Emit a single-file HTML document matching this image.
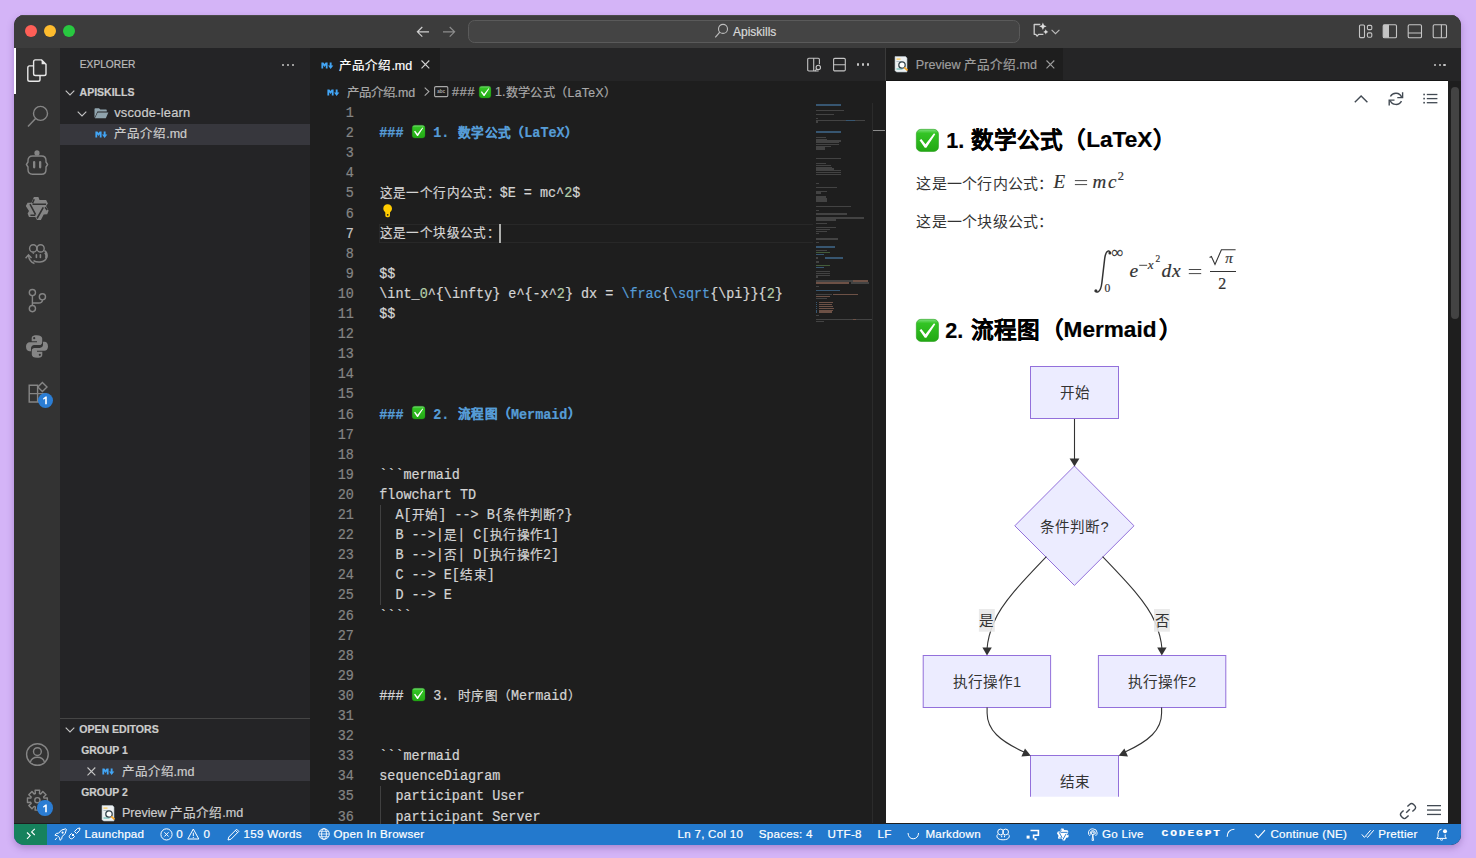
<!DOCTYPE html>
<html lang="zh-CN">
<head>
<meta charset="utf-8">
<style>
*{box-sizing:border-box;margin:0;padding:0}
html,body{width:1476px;height:858px;overflow:hidden}
body{background:#d4b4f7;font-family:"Liberation Sans",sans-serif;position:relative}
#win{position:absolute;left:14px;top:15px;width:1447px;height:830px;border-radius:10px;overflow:hidden;background:#1e1e1e;box-shadow:0 3px 7px rgba(90,50,130,0.35)}
#pg{position:absolute;left:-14px;top:-15px;width:1476px;height:858px}
.a{position:absolute}
.t{position:absolute;white-space:pre;line-height:1;-webkit-text-stroke:0.2px}
.dot{position:absolute;width:12px;height:12px;border-radius:50%;top:24.6px}
svg{position:absolute;overflow:visible}
</style>
</head>
<body>
<div id="win"><div id="pg">
<div class="a" style="left:0px;top:0px;width:1476px;height:48px;background:#3c3c3c;"></div>
<!-- title bar -->

<div class="dot" style="left:24.6px;background:#fe5f57"></div>
<div class="dot" style="left:43.9px;background:#febc2e"></div>
<div class="dot" style="left:62.9px;background:#28c840"></div>

<div class="a" style="left:0;top:15px;width:1476px;height:1px;background:#4a4a4a"></div>
<!-- nav arrows -->
<svg style="left:416px;top:26px" width="14" height="12" viewBox="0 0 14 12"><path d="M13 5.8H1.6M6.3 1L1.4 5.8l4.9 4.9" fill="none" stroke="#cfcfcf" stroke-width="1.2"/></svg>
<svg style="left:441.5px;top:26px" width="14" height="12" viewBox="0 0 14 12"><path d="M1 5.8h11.4M7.7 1l4.9 4.8-4.9 4.9" fill="none" stroke="#8c8c8c" stroke-width="1.2"/></svg>
<!-- command center -->
<div class="a" style="left:468px;top:19.5px;width:552px;height:23px;border:1px solid #5a5a5a;border-radius:6.5px;background:#444444"></div>
<svg style="left:714px;top:23px" width="14" height="16" viewBox="0 0 14 16"><circle cx="9" cy="5.9" r="4.5" fill="none" stroke="#bdbdbd" stroke-width="1.1"/><path d="M5.8 9.2L1.3 14.4" stroke="#bdbdbd" stroke-width="1.2"/></svg>
<div class="t" style="left:733px;top:26px;font-size:12px;color:#d8d8d8">Apiskills</div>
<!-- copilot -->
<svg style="left:1032px;top:22px" width="18" height="18" viewBox="0 0 18 18"><path d="M8.3 2.5H2.2v9.8h1.6l1.3 1.8 1.5-1.8h4.8" fill="none" stroke="#cccccc" stroke-width="1.3" stroke-linejoin="round"/><path d="M10.9 0.6l1.1 2.6 2.6 1.1-2.6 1.1-1.1 2.6-1.1-2.6-2.6-1.1 2.6-1.1z" fill="#dddddd"/><path d="M13.8 7.3l0.8 1.8 1.8 0.8-1.8 0.8-0.8 1.8-0.8-1.8-1.8-0.8 1.8-0.8z" fill="#dddddd"/></svg>
<svg style="left:1051px;top:28.5px" width="9" height="6" viewBox="0 0 9 6"><path d="M0.6 0.8l3.9 3.9 3.9-3.9" fill="none" stroke="#bdbdbd" stroke-width="1.1"/></svg>
<!-- layout icons -->
<svg style="left:1358px;top:24px" width="16" height="15" viewBox="0 0 16 15"><rect x="1.5" y="1" width="5" height="12.6" rx="1" fill="none" stroke="#c5c5c5" stroke-width="1.1"/><rect x="9.4" y="1.4" width="4.4" height="4.2" rx="1.2" fill="none" stroke="#c5c5c5" stroke-width="1.1"/><rect x="9.4" y="8.9" width="4.4" height="4.3" rx="1.2" fill="none" stroke="#c5c5c5" stroke-width="1.1"/></svg>
<svg style="left:1382px;top:24px" width="16" height="15" viewBox="0 0 16 15"><rect x="1.2" y="0.8" width="13.3" height="12.9" rx="1.3" fill="none" stroke="#c5c5c5" stroke-width="1.1"/><rect x="1.2" y="0.8" width="5.8" height="12.9" fill="#c5c5c5"/></svg>
<svg style="left:1407px;top:24px" width="16" height="15" viewBox="0 0 16 15"><rect x="1.2" y="0.8" width="13.3" height="12.9" rx="1.3" fill="none" stroke="#c5c5c5" stroke-width="1.1"/><path d="M1.2 9h13.3" stroke="#c5c5c5" stroke-width="1.1"/></svg>
<svg style="left:1432px;top:24px" width="16" height="15" viewBox="0 0 16 15"><rect x="1.2" y="0.8" width="13.3" height="12.9" rx="1.3" fill="none" stroke="#c5c5c5" stroke-width="1.1"/><path d="M9.4 0.8v12.9" stroke="#c5c5c5" stroke-width="1.1"/></svg>

<div class="a" style="left:0px;top:48px;width:60px;height:775px;background:#333333;"></div>



<div class="a" style="left:14px;top:48px;width:2px;height:45.5px;background:#ffffff"></div>
<!-- explorer -->
<svg style="left:26px;top:58px" width="22" height="26" viewBox="0 0 22 26"><path d="M9.4 1.9H15.6L20 6.3V15.7Q20 17.5 18.2 17.5H9.4Q7.6 17.5 7.6 15.7V3.7Q7.6 1.9 9.4 1.9Z" fill="none" stroke="#e8e8e8" stroke-width="1.4"/><path d="M15.6 1.9V6.3H20Z" fill="#e8e8e8"/><path d="M7.6 7.9H3.6Q1.8 7.9 1.8 9.7V21.5Q1.8 23.3 3.6 23.3H12.2Q14 23.3 14 21.5V17.5" fill="none" stroke="#e8e8e8" stroke-width="1.4"/></svg>
<!-- search -->
<svg style="left:26px;top:104px" width="24" height="26" viewBox="0 0 24 26"><circle cx="14.5" cy="9.4" r="7" fill="none" stroke="#858585" stroke-width="1.4"/><path d="M9.6 14.6L2 22.6" stroke="#858585" stroke-width="1.5"/></svg>
<!-- robot -->
<svg style="left:25px;top:149px" width="26" height="28" viewBox="0 0 26 28"><circle cx="12" cy="3.9" r="2.6" fill="#858585"/><path d="M7.5 7H16.5Q21 7 21 11.5V13L22.6 15.5L21 18V20.5Q21 25.3 16.5 25.3H7.5Q3 25.3 3 20.5V18L1.4 15.5L3 13V11.5Q3 7 7.5 7Z" fill="none" stroke="#858585" stroke-width="1.4" stroke-linejoin="round"/><rect x="8" y="12" width="2.3" height="7.4" rx="1.1" fill="#858585"/><rect x="14" y="12" width="2.3" height="7.4" rx="1.1" fill="#858585"/></svg>
<!-- star/qoder -->
<svg style="left:22px;top:194px" width="30" height="30" viewBox="0 0 30 30"><path d="M11.9 3H16.4L17.5 5.9L24.1 6.1L25.9 9.4L24.1 11.9L26.6 16.8L25.2 20.3L21.7 20.6L18.9 25.9H15L13.3 23.1H7L5.6 19.6L7 17.1L3.8 11.9L5.6 8.7H9.4Z" fill="#858585"/><path d="M10.5 10.3H24.1M8 10.1L13.6 20.6M21.3 13.3L15 24.5M12.2 5.2L10.5 9.1M8.4 21.3H13.3M23.1 13.3L25.2 16.1" stroke="#333333" stroke-width="1.6" fill="none"/></svg>
<!-- copilot face -->
<svg style="left:24px;top:242px" width="26" height="24" viewBox="0 0 26 24"><circle cx="9.2" cy="6.4" r="3.6" fill="none" stroke="#858585" stroke-width="1.4"/><circle cx="16.6" cy="6.4" r="3.6" fill="none" stroke="#858585" stroke-width="1.4"/><path d="M8.5 10.5Q9 11 10 11.5" stroke="#858585" stroke-width="1.2"/><path d="M20.3 8.6Q23.5 10 23 14.5Q22 19.5 16 20Q12 20.3 9.5 18.6" fill="none" stroke="#858585" stroke-width="1.4"/><path d="M21 10.5Q23 12.5 22 16" stroke="#858585" stroke-width="2.2" fill="none"/><rect x="11.6" y="12" width="1.6" height="4.2" rx=".8" fill="#858585"/><rect x="15.6" y="12" width="1.6" height="4.2" rx=".8" fill="#858585"/><path d="M4.5 13.6Q5.2 19.5 10.5 21.5" fill="none" stroke="#858585" stroke-width="1.4"/><path d="M1.6 16.3L4.5 12.8L7.5 16" fill="none" stroke="#858585" stroke-width="1.4"/></svg>
<!-- git -->
<svg style="left:26px;top:286px" width="24" height="28" viewBox="0 0 24 28"><circle cx="6.4" cy="6.6" r="3.1" fill="none" stroke="#858585" stroke-width="1.4"/><circle cx="6.4" cy="22.6" r="3.1" fill="none" stroke="#858585" stroke-width="1.4"/><circle cx="16.4" cy="10.8" r="3.1" fill="none" stroke="#858585" stroke-width="1.4"/><path d="M6.4 9.7V19.5M16.4 13.9Q16.4 17 12.5 17H6.4" fill="none" stroke="#858585" stroke-width="1.4"/></svg>
<!-- python -->
<svg style="left:25px;top:334px" width="24" height="25" viewBox="0 0 24 25"><path d="M11.6 1.2C7.2 1.2 6.7 3 6.7 4.5V7.2H12V8.2H4.6C2.6 8.2 1 10 1 12.6C1 15.5 2.4 17.2 4.4 17.2H6V14.2C6 12.5 7.5 11.1 9.2 11.1H14.6C16 11.1 17.2 9.9 17.2 8.5V4.5C17.2 2.5 15.4 1.2 11.6 1.2Z" fill="#858585"/><path d="M12.4 23.8C16.8 23.8 17.3 22 17.3 20.5V17.8H12V16.8H19.4C21.4 16.8 23 15 23 12.4C23 9.5 21.6 7.8 19.6 7.8H18V10.8C18 12.5 16.5 13.9 14.8 13.9H9.4C8 13.9 6.8 15.1 6.8 16.5V20.5C6.8 22.5 8.6 23.8 12.4 23.8Z" fill="#858585"/><circle cx="9.2" cy="4.2" r="1.1" fill="#333"/><circle cx="14.8" cy="20.8" r="1.1" fill="#333"/></svg>
<!-- extensions -->
<svg style="left:26px;top:380px" width="26" height="26" viewBox="0 0 26 26"><path d="M3.2 5.2H11.6V22H3.2ZM3.2 13.6H20V22H11.6" fill="none" stroke="#858585" stroke-width="1.4"/><path d="M16.4 2.4L21 7L16.4 11.6L11.8 7Z" fill="none" stroke="#858585" stroke-width="1.4"/></svg>
<div class="a" style="left:37.6px;top:392.8px;width:15px;height:15px;border-radius:50%;background:#2b7dd3"></div>
<svg style="left:42px;top:396px" width="7" height="9" viewBox="0 0 7 9"><path d="M1 2.4L3.6 0.6H4.8V8.2H3.2V2.6L1.6 3.7Z" fill="#fff"/></svg>
<!-- account -->
<svg style="left:25px;top:742px" width="25" height="25" viewBox="0 0 25 25"><circle cx="12.4" cy="12.5" r="10.8" fill="none" stroke="#858585" stroke-width="1.4"/><circle cx="12.4" cy="9.6" r="3.9" fill="none" stroke="#858585" stroke-width="1.4"/><path d="M5.3 20.4Q6.5 15.3 12.4 15.3Q18.3 15.3 19.5 20.4" fill="none" stroke="#858585" stroke-width="1.4"/></svg>
<!-- gear -->
<svg style="left:25px;top:788px" width="25" height="25" viewBox="0 0 25 25"><path d="M10.35 5.51 L10.11 2.26 L14.69 2.26 L14.45 5.51 L15.69 6.02 L17.81 3.55 L21.05 6.79 L18.58 8.91 L19.09 10.15 L22.34 9.91 L22.34 14.49 L19.09 14.25 L18.58 15.49 L21.05 17.61 L17.81 20.85 L15.69 18.38 L14.45 18.89 L14.69 22.14 L10.11 22.14 L10.35 18.89 L9.11 18.38 L6.99 20.85 L3.75 17.61 L6.22 15.49 L5.71 14.25 L2.46 14.49 L2.46 9.91 L5.71 10.15 L6.22 8.91 L3.75 6.79 L6.99 3.55 L9.11 6.02Z" fill="none" stroke="#858585" stroke-width="1.4" stroke-linejoin="round"/><circle cx="12.4" cy="12.2" r="2.6" fill="none" stroke="#858585" stroke-width="1.4"/></svg>
<div class="a" style="left:37.3px;top:800.2px;width:15.4px;height:15.4px;border-radius:50%;background:#2b7dd3"></div>
<svg style="left:41.8px;top:803.6px" width="7" height="9" viewBox="0 0 7 9"><path d="M1 2.4L3.6 0.6H4.8V8.2H3.2V2.6L1.6 3.7Z" fill="#fff"/></svg>

<div class="a" style="left:60px;top:48px;width:250px;height:775px;background:#242426;"></div>
<div class="t" style="left:79.8px;top:59.93px;font-size:10.2px;color:#bbbbbb;font-weight:normal;letter-spacing:0px;font-family:'Liberation Sans',sans-serif;">EXPLORER</div>
<div class="a" style="left:282.0px;top:63.5px;width:2.2px;height:2.2px;border-radius:50%;background:#c5c5c5"></div>
<div class="a" style="left:286.9px;top:63.5px;width:2.2px;height:2.2px;border-radius:50%;background:#c5c5c5"></div>
<div class="a" style="left:291.79999999999995px;top:63.5px;width:2.2px;height:2.2px;border-radius:50%;background:#c5c5c5"></div>
<svg style="left:64.8px;top:89.6px" width="10" height="6" viewBox="0 0 10 6"><path d="M0.7 0.7L5 5L9.3 0.7" fill="none" stroke="#c5c5c5" stroke-width="1.1"/></svg>
<div class="t" style="left:79.6px;top:87.28px;font-size:10.5px;color:#cccccc;font-weight:bold;letter-spacing:0px;font-family:'Liberation Sans',sans-serif;">APISKILLS</div>
<svg style="left:77px;top:110.8px" width="10" height="6" viewBox="0 0 10 6"><path d="M0.7 0.7L5 5L9.3 0.7" fill="none" stroke="#c5c5c5" stroke-width="1.1"/></svg>
<svg style="left:93.5px;top:108px" width="15" height="11" viewBox="0 0 15 11"><path d="M0.5 1.2Q0.5 0.3 1.4 0.3H5L6.3 1.6H12Q12.8 1.6 12.8 2.4V3.6H3.4L0.5 10Z" fill="#90a4ae"/><path d="M3.6 4.4H14.4L11.8 10.2H0.9Z" fill="#90a4ae"/></svg>
<div class="t" style="left:114.2px;top:107.13px;font-size:12.9px;color:#cccccc;font-weight:normal;letter-spacing:0.2px;font-family:'Liberation Sans',sans-serif;">vscode-learn</div>
<div class="a" style="left:60px;top:123.5px;width:250px;height:21px;background:#37373d;"></div>
<svg style="left:94.5px;top:131px" width="13" height="7" viewBox="0 0 13 7"><path d="M0.4 6.6V0.4H2.4L3.5 2.1L4.6 0.4H6.6V6.6H4.8V3.3L3.5 5L2.2 3.3V6.6Z" fill="#42a5f5"/><path d="M8.7 0.4H10.6V3.4H12.3L9.65 6.9L7 3.4H8.7Z" fill="#42a5f5"/></svg>
<div class="t" style="left:114.2px;top:128.28px;font-size:12.5px;color:#cccccc;font-weight:normal;letter-spacing:0px;font-family:'Liberation Sans',sans-serif;">产品介绍.md</div>
<div class="a" style="left:60px;top:718.3px;width:250px;height:1px;background:#454545;"></div>
<svg style="left:64.9px;top:726.6px" width="10" height="6" viewBox="0 0 10 6"><path d="M0.7 0.7L5 5L9.3 0.7" fill="none" stroke="#c5c5c5" stroke-width="1.1"/></svg>
<div class="t" style="left:79.2px;top:724.43px;font-size:10.55px;color:#cccccc;font-weight:bold;letter-spacing:0px;font-family:'Liberation Sans',sans-serif;">OPEN EDITORS</div>
<div class="t" style="left:81.2px;top:745.96px;font-size:10.4px;color:#cccccc;font-weight:bold;letter-spacing:0px;font-family:'Liberation Sans',sans-serif;">GROUP 1</div>
<div class="a" style="left:60px;top:760.2px;width:250px;height:21.1px;background:#37373d;"></div>
<svg style="left:86.5px;top:767px" width="9" height="9" viewBox="0 0 9 9"><path d="M0.5 0.5L8.3 8.3M8.3 0.5L0.5 8.3" stroke="#c5c5c5" stroke-width="1.1"/></svg>
<svg style="left:102px;top:768.2px" width="13" height="7" viewBox="0 0 13 7"><path d="M0.4 6.6V0.4H2.4L3.5 2.1L4.6 0.4H6.6V6.6H4.8V3.3L3.5 5L2.2 3.3V6.6Z" fill="#42a5f5"/><path d="M8.7 0.4H10.6V3.4H12.3L9.65 6.9L7 3.4H8.7Z" fill="#42a5f5"/></svg>
<div class="t" style="left:121.5px;top:765.98px;font-size:12.5px;color:#cccccc;font-weight:normal;letter-spacing:0px;font-family:'Liberation Sans',sans-serif;">产品介绍.md</div>
<div class="t" style="left:81.2px;top:788.06px;font-size:10.4px;color:#cccccc;font-weight:bold;letter-spacing:0px;font-family:'Liberation Sans',sans-serif;">GROUP 2</div>
<svg style="left:100.5px;top:804.8px" width="16" height="17" viewBox="0 0 16 17"><path d="M1 0.5H11.5L13 2V16H2.5L1 14.5Z" fill="#eceff1"/><path d="M1 0.5H11.5L13 2V16H2.5L1 14.5Z" fill="none" stroke="#b0bec5" stroke-width=".6"/><rect x="2.5" y="2.5" width="4" height="1.2" fill="#f9c74f"/><rect x="2.5" y="5" width="6" height="1" fill="#b0bec5"/><rect x="2.5" y="12.5" width="6" height="1" fill="#4db6ac"/><circle cx="8" cy="9" r="3.2" fill="#fff" stroke="#37474f" stroke-width="1.3"/><path d="M10.3 11.3L13.5 14.3" stroke="#f9a825" stroke-width="1.8"/></svg>
<div class="t" style="left:121.9px;top:807.49px;font-size:12.6px;color:#cccccc;font-weight:normal;letter-spacing:0px;font-family:'Liberation Sans',sans-serif;">Preview 产品介绍.md</div>
<div class="a" style="left:310px;top:48px;width:576px;height:775px;background:#1e1e1e;"></div>
<div class="a" style="left:440px;top:48px;width:446px;height:33px;background:#252526;"></div>
<svg style="left:321.2px;top:61.5px" width="13" height="7" viewBox="0 0 13 7"><path d="M0.4 6.6V0.4H2.4L3.5 2.1L4.6 0.4H6.6V6.6H4.8V3.3L3.5 5L2.2 3.3V6.6Z" fill="#42a5f5"/><path d="M8.7 0.4H10.6V3.4H12.3L9.65 6.9L7 3.4H8.7Z" fill="#42a5f5"/></svg>
<div class="t" style="left:339.4px;top:59.67px;font-size:12.5px;color:#ffffff;font-weight:normal;letter-spacing:0px;font-family:'Liberation Sans',sans-serif;">产品介绍.md</div>
<svg style="left:420.8px;top:60.2px" width="9" height="9" viewBox="0 0 9 9"><path d="M0.5 0.5L8.3 8.3M8.3 0.5L0.5 8.3" stroke="#d0d0d0" stroke-width="1.1"/></svg>
<svg style="left:806.5px;top:57.5px" width="16" height="16" viewBox="0 0 16 16"><path d="M11.6 13H1.9Q0.7 13 0.7 11.8V1.5Q0.7 0.3 1.9 0.3H11.2Q12.4 0.3 12.4 1.5V6.2" fill="none" stroke="#c5c5c5" stroke-width="1.1"/><path d="M6.7 0.3V13" stroke="#c5c5c5" stroke-width="1.1"/><circle cx="11.3" cy="9.4" r="2.2" fill="#252526" stroke="#c5c5c5" stroke-width="1.1"/><path d="M9.7 11L7.8 13.2" stroke="#c5c5c5" stroke-width="1.1"/></svg>
<svg style="left:832.7px;top:57.5px" width="13" height="14" viewBox="0 0 13 14"><rect x="0.6" y="0.4" width="11.7" height="12.5" rx="1.2" fill="none" stroke="#c5c5c5" stroke-width="1.1"/><path d="M0.6 6.7H12.3" stroke="#c5c5c5" stroke-width="1.1"/></svg>
<div class="a" style="left:857.3px;top:63.4px;width:2.2px;height:2.2px;border-radius:50%;background:#c5c5c5"></div>
<div class="a" style="left:862.1999999999999px;top:63.4px;width:2.2px;height:2.2px;border-radius:50%;background:#c5c5c5"></div>
<div class="a" style="left:867.0px;top:63.4px;width:2.2px;height:2.2px;border-radius:50%;background:#c5c5c5"></div>
<svg style="left:326.8px;top:89.2px" width="13" height="7" viewBox="0 0 13 7"><path d="M0.4 6.6V0.4H2.4L3.5 2.1L4.6 0.4H6.6V6.6H4.8V3.3L3.5 5L2.2 3.3V6.6Z" fill="#42a5f5"/><path d="M8.7 0.4H10.6V3.4H12.3L9.65 6.9L7 3.4H8.7Z" fill="#42a5f5"/></svg>
<div class="t" style="left:346.6px;top:86.66px;font-size:12.4px;color:#a9a9a9;font-weight:normal;letter-spacing:0px;font-family:'Liberation Sans',sans-serif;">产品介绍.md</div>
<svg style="left:423.5px;top:87px" width="6" height="10" viewBox="0 0 6 10"><path d="M0.7 0.6L4.9 4.6L0.7 8.6" fill="none" stroke="#a9a9a9" stroke-width="1.1"/></svg>
<svg style="left:433.8px;top:85.8px" width="15" height="12" viewBox="0 0 15 12"><rect x="0.6" y="0.6" width="13.2" height="10" rx="1.2" fill="none" stroke="#a9a9a9" stroke-width="1.1"/><text x="7.2" y="7.3" font-size="4.6" font-family="Liberation Sans" font-weight="bold" fill="#a9a9a9" text-anchor="middle">abc</text></svg>
<div class="t" style="left:451.9px;top:86.06px;font-size:12.4px;color:#a9a9a9;font-weight:normal;letter-spacing:0.9px;font-family:'Liberation Sans',sans-serif;">###</div>
<svg style="left:0;top:0" width="0" height="0"><defs><linearGradient id="chkg" x1="0" y1="0" x2="0" y2="1"><stop offset="0" stop-color="#7be07a"/><stop offset="0.18" stop-color="#33c424"/><stop offset="1" stop-color="#22a814"/></linearGradient></defs></svg>
<svg style="left:478.6px;top:85.9px" width="12.1" height="12.1" viewBox="0 0 20 20"><rect x="0.3" y="0.3" width="19.4" height="19.4" rx="4" fill="url(#chkg)" stroke="#1f9a14" stroke-width="0.5"/><path d="M3.1 9.9L4.7 8.7L8.3 13.4L15.8 3.7L16.9 4.5L9.1 16.5L7.7 16.5Z" fill="#ffffff"/></svg>
<div class="t" style="left:495px;top:86.36px;font-size:12.4px;color:#a9a9a9;font-weight:normal;letter-spacing:0px;font-family:'Liberation Sans',sans-serif;">1.</div>
<div class="t" style="left:505.6px;top:86.83px;font-size:12.2px;color:#a9a9a9;font-weight:normal;letter-spacing:0.38px;font-family:'Liberation Sans',sans-serif;">数学公式（LaTeX）</div>
<div class="a" style="left:379.3px;top:223.75px;width:434px;height:19px;border:1px solid #282828;border-right:none"></div>
<div class="t" style="left:300px;top:107.03px;width:53.8px;text-align:right;font-family:'Liberation Mono',monospace;font-size:13.45px;color:#858585;transform:scaleY(1.12);transform-origin:0 10.22px">1</div>
<div class="t" style="left:300px;top:127.13px;width:53.8px;text-align:right;font-family:'Liberation Mono',monospace;font-size:13.45px;color:#858585;transform:scaleY(1.12);transform-origin:0 10.22px">2</div>
<div class="t" style="left:300px;top:147.23px;width:53.8px;text-align:right;font-family:'Liberation Mono',monospace;font-size:13.45px;color:#858585;transform:scaleY(1.12);transform-origin:0 10.22px">3</div>
<div class="t" style="left:300px;top:167.33px;width:53.8px;text-align:right;font-family:'Liberation Mono',monospace;font-size:13.45px;color:#858585;transform:scaleY(1.12);transform-origin:0 10.22px">4</div>
<div class="t" style="left:300px;top:187.43px;width:53.8px;text-align:right;font-family:'Liberation Mono',monospace;font-size:13.45px;color:#858585;transform:scaleY(1.12);transform-origin:0 10.22px">5</div>
<div class="t" style="left:300px;top:207.53px;width:53.8px;text-align:right;font-family:'Liberation Mono',monospace;font-size:13.45px;color:#858585;transform:scaleY(1.12);transform-origin:0 10.22px">6</div>
<div class="t" style="left:300px;top:227.63px;width:53.8px;text-align:right;font-family:'Liberation Mono',monospace;font-size:13.45px;color:#c6c6c6;transform:scaleY(1.12);transform-origin:0 10.22px">7</div>
<div class="t" style="left:300px;top:247.73px;width:53.8px;text-align:right;font-family:'Liberation Mono',monospace;font-size:13.45px;color:#858585;transform:scaleY(1.12);transform-origin:0 10.22px">8</div>
<div class="t" style="left:300px;top:267.83px;width:53.8px;text-align:right;font-family:'Liberation Mono',monospace;font-size:13.45px;color:#858585;transform:scaleY(1.12);transform-origin:0 10.22px">9</div>
<div class="t" style="left:300px;top:287.93px;width:53.8px;text-align:right;font-family:'Liberation Mono',monospace;font-size:13.45px;color:#858585;transform:scaleY(1.12);transform-origin:0 10.22px">10</div>
<div class="t" style="left:300px;top:308.03px;width:53.8px;text-align:right;font-family:'Liberation Mono',monospace;font-size:13.45px;color:#858585;transform:scaleY(1.12);transform-origin:0 10.22px">11</div>
<div class="t" style="left:300px;top:328.13px;width:53.8px;text-align:right;font-family:'Liberation Mono',monospace;font-size:13.45px;color:#858585;transform:scaleY(1.12);transform-origin:0 10.22px">12</div>
<div class="t" style="left:300px;top:348.23px;width:53.8px;text-align:right;font-family:'Liberation Mono',monospace;font-size:13.45px;color:#858585;transform:scaleY(1.12);transform-origin:0 10.22px">13</div>
<div class="t" style="left:300px;top:368.33px;width:53.8px;text-align:right;font-family:'Liberation Mono',monospace;font-size:13.45px;color:#858585;transform:scaleY(1.12);transform-origin:0 10.22px">14</div>
<div class="t" style="left:300px;top:388.43px;width:53.8px;text-align:right;font-family:'Liberation Mono',monospace;font-size:13.45px;color:#858585;transform:scaleY(1.12);transform-origin:0 10.22px">15</div>
<div class="t" style="left:300px;top:408.53px;width:53.8px;text-align:right;font-family:'Liberation Mono',monospace;font-size:13.45px;color:#858585;transform:scaleY(1.12);transform-origin:0 10.22px">16</div>
<div class="t" style="left:300px;top:428.63px;width:53.8px;text-align:right;font-family:'Liberation Mono',monospace;font-size:13.45px;color:#858585;transform:scaleY(1.12);transform-origin:0 10.22px">17</div>
<div class="t" style="left:300px;top:448.73px;width:53.8px;text-align:right;font-family:'Liberation Mono',monospace;font-size:13.45px;color:#858585;transform:scaleY(1.12);transform-origin:0 10.22px">18</div>
<div class="t" style="left:300px;top:468.83px;width:53.8px;text-align:right;font-family:'Liberation Mono',monospace;font-size:13.45px;color:#858585;transform:scaleY(1.12);transform-origin:0 10.22px">19</div>
<div class="t" style="left:300px;top:488.93px;width:53.8px;text-align:right;font-family:'Liberation Mono',monospace;font-size:13.45px;color:#858585;transform:scaleY(1.12);transform-origin:0 10.22px">20</div>
<div class="t" style="left:300px;top:509.03px;width:53.8px;text-align:right;font-family:'Liberation Mono',monospace;font-size:13.45px;color:#858585;transform:scaleY(1.12);transform-origin:0 10.22px">21</div>
<div class="t" style="left:300px;top:529.13px;width:53.8px;text-align:right;font-family:'Liberation Mono',monospace;font-size:13.45px;color:#858585;transform:scaleY(1.12);transform-origin:0 10.22px">22</div>
<div class="t" style="left:300px;top:549.23px;width:53.8px;text-align:right;font-family:'Liberation Mono',monospace;font-size:13.45px;color:#858585;transform:scaleY(1.12);transform-origin:0 10.22px">23</div>
<div class="t" style="left:300px;top:569.33px;width:53.8px;text-align:right;font-family:'Liberation Mono',monospace;font-size:13.45px;color:#858585;transform:scaleY(1.12);transform-origin:0 10.22px">24</div>
<div class="t" style="left:300px;top:589.43px;width:53.8px;text-align:right;font-family:'Liberation Mono',monospace;font-size:13.45px;color:#858585;transform:scaleY(1.12);transform-origin:0 10.22px">25</div>
<div class="t" style="left:300px;top:609.53px;width:53.8px;text-align:right;font-family:'Liberation Mono',monospace;font-size:13.45px;color:#858585;transform:scaleY(1.12);transform-origin:0 10.22px">26</div>
<div class="t" style="left:300px;top:629.63px;width:53.8px;text-align:right;font-family:'Liberation Mono',monospace;font-size:13.45px;color:#858585;transform:scaleY(1.12);transform-origin:0 10.22px">27</div>
<div class="t" style="left:300px;top:649.73px;width:53.8px;text-align:right;font-family:'Liberation Mono',monospace;font-size:13.45px;color:#858585;transform:scaleY(1.12);transform-origin:0 10.22px">28</div>
<div class="t" style="left:300px;top:669.83px;width:53.8px;text-align:right;font-family:'Liberation Mono',monospace;font-size:13.45px;color:#858585;transform:scaleY(1.12);transform-origin:0 10.22px">29</div>
<div class="t" style="left:300px;top:689.93px;width:53.8px;text-align:right;font-family:'Liberation Mono',monospace;font-size:13.45px;color:#858585;transform:scaleY(1.12);transform-origin:0 10.22px">30</div>
<div class="t" style="left:300px;top:710.03px;width:53.8px;text-align:right;font-family:'Liberation Mono',monospace;font-size:13.45px;color:#858585;transform:scaleY(1.12);transform-origin:0 10.22px">31</div>
<div class="t" style="left:300px;top:730.13px;width:53.8px;text-align:right;font-family:'Liberation Mono',monospace;font-size:13.45px;color:#858585;transform:scaleY(1.12);transform-origin:0 10.22px">32</div>
<div class="t" style="left:300px;top:750.23px;width:53.8px;text-align:right;font-family:'Liberation Mono',monospace;font-size:13.45px;color:#858585;transform:scaleY(1.12);transform-origin:0 10.22px">33</div>
<div class="t" style="left:300px;top:770.33px;width:53.8px;text-align:right;font-family:'Liberation Mono',monospace;font-size:13.45px;color:#858585;transform:scaleY(1.12);transform-origin:0 10.22px">34</div>
<div class="t" style="left:300px;top:790.43px;width:53.8px;text-align:right;font-family:'Liberation Mono',monospace;font-size:13.45px;color:#858585;transform:scaleY(1.12);transform-origin:0 10.22px">35</div>
<div class="t" style="left:300px;top:810.53px;width:53.8px;text-align:right;font-family:'Liberation Mono',monospace;font-size:13.45px;color:#858585;transform:scaleY(1.12);transform-origin:0 10.22px">36</div>
<div class="t" style="left:379.3px;top:127.13px;font-size:13.45px;color:#569cd6;font-weight:bold;letter-spacing:0px;font-family:'Liberation Mono',monospace;transform:scaleY(1.12);transform-origin:0 10.22px">### </div>
<svg style="left:411.78px;top:124.94999999999999px" width="13.2" height="13.2" viewBox="0 0 20 20"><rect x="0.3" y="0.3" width="19.4" height="19.4" rx="4" fill="url(#chkg)" stroke="#1f9a14" stroke-width="0.5"/><path d="M3.1 9.9L4.7 8.7L8.3 13.4L15.8 3.7L16.9 4.5L9.1 16.5L7.7 16.5Z" fill="#ffffff"/></svg>
<div class="t" style="left:425.18px;top:127.13px;font-size:13.45px;color:#569cd6;font-weight:bold;letter-spacing:0px;font-family:'Liberation Mono',monospace;transform:scaleY(1.12);transform-origin:0 10.22px"> 1. </div>
<div class="t" style="left:457.85999999999996px;top:127.77px;font-size:12.6px;color:#569cd6;font-weight:bold;letter-spacing:0px;font-family:'Liberation Mono',monospace;">数</div>
<div class="t" style="left:471.22999999999996px;top:127.77px;font-size:12.6px;color:#569cd6;font-weight:bold;letter-spacing:0px;font-family:'Liberation Mono',monospace;">学</div>
<div class="t" style="left:484.59999999999997px;top:127.77px;font-size:12.6px;color:#569cd6;font-weight:bold;letter-spacing:0px;font-family:'Liberation Mono',monospace;">公</div>
<div class="t" style="left:497.96999999999997px;top:127.77px;font-size:12.6px;color:#569cd6;font-weight:bold;letter-spacing:0px;font-family:'Liberation Mono',monospace;">式</div>
<div class="t" style="left:511.34px;top:127.77px;font-size:12.6px;color:#569cd6;font-weight:bold;letter-spacing:0px;font-family:'Liberation Mono',monospace;">（</div>
<div class="t" style="left:524.31px;top:127.13px;font-size:13.45px;color:#569cd6;font-weight:bold;letter-spacing:0px;font-family:'Liberation Mono',monospace;transform:scaleY(1.12);transform-origin:0 10.22px">LaTeX</div>
<div class="t" style="left:565.0600000000002px;top:127.77px;font-size:12.6px;color:#569cd6;font-weight:bold;letter-spacing:0px;font-family:'Liberation Mono',monospace;">）</div>
<div class="t" style="left:379.7px;top:188.07px;font-size:12.6px;color:#d4d4d4;font-weight:normal;letter-spacing:0px;font-family:'Liberation Mono',monospace;">这</div>
<div class="t" style="left:393.07px;top:188.07px;font-size:12.6px;color:#d4d4d4;font-weight:normal;letter-spacing:0px;font-family:'Liberation Mono',monospace;">是</div>
<div class="t" style="left:406.44px;top:188.07px;font-size:12.6px;color:#d4d4d4;font-weight:normal;letter-spacing:0px;font-family:'Liberation Mono',monospace;">一</div>
<div class="t" style="left:419.81px;top:188.07px;font-size:12.6px;color:#d4d4d4;font-weight:normal;letter-spacing:0px;font-family:'Liberation Mono',monospace;">个</div>
<div class="t" style="left:433.18px;top:188.07px;font-size:12.6px;color:#d4d4d4;font-weight:normal;letter-spacing:0px;font-family:'Liberation Mono',monospace;">行</div>
<div class="t" style="left:446.55px;top:188.07px;font-size:12.6px;color:#d4d4d4;font-weight:normal;letter-spacing:0px;font-family:'Liberation Mono',monospace;">内</div>
<div class="t" style="left:459.92px;top:188.07px;font-size:12.6px;color:#d4d4d4;font-weight:normal;letter-spacing:0px;font-family:'Liberation Mono',monospace;">公</div>
<div class="t" style="left:473.29px;top:188.07px;font-size:12.6px;color:#d4d4d4;font-weight:normal;letter-spacing:0px;font-family:'Liberation Mono',monospace;">式</div>
<div class="t" style="left:486.66px;top:188.07px;font-size:12.6px;color:#d4d4d4;font-weight:normal;letter-spacing:0px;font-family:'Liberation Mono',monospace;">：</div>
<div class="t" style="left:499.63000000000005px;top:187.43px;font-size:13.45px;color:#d4d4d4;font-weight:normal;letter-spacing:0px;font-family:'Liberation Mono',monospace;transform:scaleY(1.12);transform-origin:0 10.22px">$E = mc^</div>
<div class="t" style="left:564.1900000000004px;top:187.43px;font-size:13.45px;color:#b5cea8;font-weight:normal;letter-spacing:0px;font-family:'Liberation Mono',monospace;transform:scaleY(1.12);transform-origin:0 10.22px">2</div>
<div class="t" style="left:572.2600000000004px;top:187.43px;font-size:13.45px;color:#d4d4d4;font-weight:normal;letter-spacing:0px;font-family:'Liberation Mono',monospace;transform:scaleY(1.12);transform-origin:0 10.22px">$</div>
<div class="t" style="left:379.7px;top:228.27px;font-size:12.6px;color:#d4d4d4;font-weight:normal;letter-spacing:0px;font-family:'Liberation Mono',monospace;">这</div>
<div class="t" style="left:393.07px;top:228.27px;font-size:12.6px;color:#d4d4d4;font-weight:normal;letter-spacing:0px;font-family:'Liberation Mono',monospace;">是</div>
<div class="t" style="left:406.44px;top:228.27px;font-size:12.6px;color:#d4d4d4;font-weight:normal;letter-spacing:0px;font-family:'Liberation Mono',monospace;">一</div>
<div class="t" style="left:419.81px;top:228.27px;font-size:12.6px;color:#d4d4d4;font-weight:normal;letter-spacing:0px;font-family:'Liberation Mono',monospace;">个</div>
<div class="t" style="left:433.18px;top:228.27px;font-size:12.6px;color:#d4d4d4;font-weight:normal;letter-spacing:0px;font-family:'Liberation Mono',monospace;">块</div>
<div class="t" style="left:446.55px;top:228.27px;font-size:12.6px;color:#d4d4d4;font-weight:normal;letter-spacing:0px;font-family:'Liberation Mono',monospace;">级</div>
<div class="t" style="left:459.92px;top:228.27px;font-size:12.6px;color:#d4d4d4;font-weight:normal;letter-spacing:0px;font-family:'Liberation Mono',monospace;">公</div>
<div class="t" style="left:473.29px;top:228.27px;font-size:12.6px;color:#d4d4d4;font-weight:normal;letter-spacing:0px;font-family:'Liberation Mono',monospace;">式</div>
<div class="t" style="left:486.66px;top:228.27px;font-size:12.6px;color:#d4d4d4;font-weight:normal;letter-spacing:0px;font-family:'Liberation Mono',monospace;">：</div>
<div class="t" style="left:379.3px;top:267.83px;font-size:13.45px;color:#d4d4d4;font-weight:normal;letter-spacing:0px;font-family:'Liberation Mono',monospace;transform:scaleY(1.12);transform-origin:0 10.22px">$$</div>
<div class="t" style="left:379.3px;top:287.93px;font-size:13.45px;color:#d4d4d4;font-weight:normal;letter-spacing:0px;font-family:'Liberation Mono',monospace;transform:scaleY(1.12);transform-origin:0 10.22px">\int_</div>
<div class="t" style="left:419.65px;top:287.93px;font-size:13.45px;color:#b5cea8;font-weight:normal;letter-spacing:0px;font-family:'Liberation Mono',monospace;transform:scaleY(1.12);transform-origin:0 10.22px">0</div>
<div class="t" style="left:427.71999999999997px;top:287.93px;font-size:13.45px;color:#d4d4d4;font-weight:normal;letter-spacing:0px;font-family:'Liberation Mono',monospace;transform:scaleY(1.12);transform-origin:0 10.22px">^{\infty} e^{-x^</div>
<div class="t" style="left:556.8400000000001px;top:287.93px;font-size:13.45px;color:#b5cea8;font-weight:normal;letter-spacing:0px;font-family:'Liberation Mono',monospace;transform:scaleY(1.12);transform-origin:0 10.22px">2</div>
<div class="t" style="left:564.9100000000002px;top:287.93px;font-size:13.45px;color:#d4d4d4;font-weight:normal;letter-spacing:0px;font-family:'Liberation Mono',monospace;transform:scaleY(1.12);transform-origin:0 10.22px">} dx = </div>
<div class="t" style="left:621.4000000000005px;top:287.93px;font-size:13.45px;color:#569cd6;font-weight:normal;letter-spacing:0px;font-family:'Liberation Mono',monospace;transform:scaleY(1.12);transform-origin:0 10.22px">\frac</div>
<div class="t" style="left:661.7500000000008px;top:287.93px;font-size:13.45px;color:#d4d4d4;font-weight:normal;letter-spacing:0px;font-family:'Liberation Mono',monospace;transform:scaleY(1.12);transform-origin:0 10.22px">{</div>
<div class="t" style="left:669.8200000000008px;top:287.93px;font-size:13.45px;color:#569cd6;font-weight:normal;letter-spacing:0px;font-family:'Liberation Mono',monospace;transform:scaleY(1.12);transform-origin:0 10.22px">\sqrt</div>
<div class="t" style="left:710.1700000000011px;top:287.93px;font-size:13.45px;color:#d4d4d4;font-weight:normal;letter-spacing:0px;font-family:'Liberation Mono',monospace;transform:scaleY(1.12);transform-origin:0 10.22px">{\pi}}{</div>
<div class="t" style="left:766.6600000000014px;top:287.93px;font-size:13.45px;color:#b5cea8;font-weight:normal;letter-spacing:0px;font-family:'Liberation Mono',monospace;transform:scaleY(1.12);transform-origin:0 10.22px">2</div>
<div class="t" style="left:774.7300000000015px;top:287.93px;font-size:13.45px;color:#d4d4d4;font-weight:normal;letter-spacing:0px;font-family:'Liberation Mono',monospace;transform:scaleY(1.12);transform-origin:0 10.22px">}</div>
<div class="t" style="left:379.3px;top:308.03px;font-size:13.45px;color:#d4d4d4;font-weight:normal;letter-spacing:0px;font-family:'Liberation Mono',monospace;transform:scaleY(1.12);transform-origin:0 10.22px">$$</div>
<div class="t" style="left:379.3px;top:408.53px;font-size:13.45px;color:#569cd6;font-weight:bold;letter-spacing:0px;font-family:'Liberation Mono',monospace;transform:scaleY(1.12);transform-origin:0 10.22px">### </div>
<svg style="left:411.78px;top:406.35px" width="13.2" height="13.2" viewBox="0 0 20 20"><rect x="0.3" y="0.3" width="19.4" height="19.4" rx="4" fill="url(#chkg)" stroke="#1f9a14" stroke-width="0.5"/><path d="M3.1 9.9L4.7 8.7L8.3 13.4L15.8 3.7L16.9 4.5L9.1 16.5L7.7 16.5Z" fill="#ffffff"/></svg>
<div class="t" style="left:425.18px;top:408.53px;font-size:13.45px;color:#569cd6;font-weight:bold;letter-spacing:0px;font-family:'Liberation Mono',monospace;transform:scaleY(1.12);transform-origin:0 10.22px"> 2. </div>
<div class="t" style="left:457.85999999999996px;top:409.17px;font-size:12.6px;color:#569cd6;font-weight:bold;letter-spacing:0px;font-family:'Liberation Mono',monospace;">流</div>
<div class="t" style="left:471.22999999999996px;top:409.17px;font-size:12.6px;color:#569cd6;font-weight:bold;letter-spacing:0px;font-family:'Liberation Mono',monospace;">程</div>
<div class="t" style="left:484.59999999999997px;top:409.17px;font-size:12.6px;color:#569cd6;font-weight:bold;letter-spacing:0px;font-family:'Liberation Mono',monospace;">图</div>
<div class="t" style="left:497.96999999999997px;top:409.17px;font-size:12.6px;color:#569cd6;font-weight:bold;letter-spacing:0px;font-family:'Liberation Mono',monospace;">（</div>
<div class="t" style="left:510.94px;top:408.53px;font-size:13.45px;color:#569cd6;font-weight:bold;letter-spacing:0px;font-family:'Liberation Mono',monospace;transform:scaleY(1.12);transform-origin:0 10.22px">Mermaid</div>
<div class="t" style="left:567.8300000000003px;top:409.17px;font-size:12.6px;color:#569cd6;font-weight:bold;letter-spacing:0px;font-family:'Liberation Mono',monospace;">）</div>
<div class="t" style="left:379.3px;top:468.83px;font-size:13.45px;color:#d4d4d4;font-weight:normal;letter-spacing:0px;font-family:'Liberation Mono',monospace;transform:scaleY(1.12);transform-origin:0 10.22px">```mermaid</div>
<div class="t" style="left:379.3px;top:488.93px;font-size:13.45px;color:#d4d4d4;font-weight:normal;letter-spacing:0px;font-family:'Liberation Mono',monospace;transform:scaleY(1.12);transform-origin:0 10.22px">flowchart TD</div>
<div class="t" style="left:379.3px;top:509.03px;font-size:13.45px;color:#d4d4d4;font-weight:normal;letter-spacing:0px;font-family:'Liberation Mono',monospace;transform:scaleY(1.12);transform-origin:0 10.22px">  A[</div>
<div class="t" style="left:411.97999999999996px;top:509.67px;font-size:12.6px;color:#d4d4d4;font-weight:normal;letter-spacing:0px;font-family:'Liberation Mono',monospace;">开</div>
<div class="t" style="left:425.34999999999997px;top:509.67px;font-size:12.6px;color:#d4d4d4;font-weight:normal;letter-spacing:0px;font-family:'Liberation Mono',monospace;">始</div>
<div class="t" style="left:438.32px;top:509.03px;font-size:13.45px;color:#d4d4d4;font-weight:normal;letter-spacing:0px;font-family:'Liberation Mono',monospace;transform:scaleY(1.12);transform-origin:0 10.22px">] --&gt; B{</div>
<div class="t" style="left:503.2799999999999px;top:509.67px;font-size:12.6px;color:#d4d4d4;font-weight:normal;letter-spacing:0px;font-family:'Liberation Mono',monospace;">条</div>
<div class="t" style="left:516.6499999999999px;top:509.67px;font-size:12.6px;color:#d4d4d4;font-weight:normal;letter-spacing:0px;font-family:'Liberation Mono',monospace;">件</div>
<div class="t" style="left:530.0199999999999px;top:509.67px;font-size:12.6px;color:#d4d4d4;font-weight:normal;letter-spacing:0px;font-family:'Liberation Mono',monospace;">判</div>
<div class="t" style="left:543.3899999999999px;top:509.67px;font-size:12.6px;color:#d4d4d4;font-weight:normal;letter-spacing:0px;font-family:'Liberation Mono',monospace;">断</div>
<div class="t" style="left:556.3599999999999px;top:509.03px;font-size:13.45px;color:#d4d4d4;font-weight:normal;letter-spacing:0px;font-family:'Liberation Mono',monospace;transform:scaleY(1.12);transform-origin:0 10.22px">?}</div>
<div class="t" style="left:379.3px;top:529.13px;font-size:13.45px;color:#d4d4d4;font-weight:normal;letter-spacing:0px;font-family:'Liberation Mono',monospace;transform:scaleY(1.12);transform-origin:0 10.22px">  B --&gt;|</div>
<div class="t" style="left:444.25999999999993px;top:529.77px;font-size:12.6px;color:#d4d4d4;font-weight:normal;letter-spacing:0px;font-family:'Liberation Mono',monospace;">是</div>
<div class="t" style="left:457.22999999999996px;top:529.13px;font-size:13.45px;color:#d4d4d4;font-weight:normal;letter-spacing:0px;font-family:'Liberation Mono',monospace;transform:scaleY(1.12);transform-origin:0 10.22px">| C[</div>
<div class="t" style="left:489.9099999999999px;top:529.77px;font-size:12.6px;color:#d4d4d4;font-weight:normal;letter-spacing:0px;font-family:'Liberation Mono',monospace;">执</div>
<div class="t" style="left:503.2799999999999px;top:529.77px;font-size:12.6px;color:#d4d4d4;font-weight:normal;letter-spacing:0px;font-family:'Liberation Mono',monospace;">行</div>
<div class="t" style="left:516.6499999999999px;top:529.77px;font-size:12.6px;color:#d4d4d4;font-weight:normal;letter-spacing:0px;font-family:'Liberation Mono',monospace;">操</div>
<div class="t" style="left:530.0199999999999px;top:529.77px;font-size:12.6px;color:#d4d4d4;font-weight:normal;letter-spacing:0px;font-family:'Liberation Mono',monospace;">作</div>
<div class="t" style="left:542.9899999999999px;top:529.13px;font-size:13.45px;color:#d4d4d4;font-weight:normal;letter-spacing:0px;font-family:'Liberation Mono',monospace;transform:scaleY(1.12);transform-origin:0 10.22px">1]</div>
<div class="t" style="left:379.3px;top:549.23px;font-size:13.45px;color:#d4d4d4;font-weight:normal;letter-spacing:0px;font-family:'Liberation Mono',monospace;transform:scaleY(1.12);transform-origin:0 10.22px">  B --&gt;|</div>
<div class="t" style="left:444.25999999999993px;top:549.87px;font-size:12.6px;color:#d4d4d4;font-weight:normal;letter-spacing:0px;font-family:'Liberation Mono',monospace;">否</div>
<div class="t" style="left:457.22999999999996px;top:549.23px;font-size:13.45px;color:#d4d4d4;font-weight:normal;letter-spacing:0px;font-family:'Liberation Mono',monospace;transform:scaleY(1.12);transform-origin:0 10.22px">| D[</div>
<div class="t" style="left:489.9099999999999px;top:549.87px;font-size:12.6px;color:#d4d4d4;font-weight:normal;letter-spacing:0px;font-family:'Liberation Mono',monospace;">执</div>
<div class="t" style="left:503.2799999999999px;top:549.87px;font-size:12.6px;color:#d4d4d4;font-weight:normal;letter-spacing:0px;font-family:'Liberation Mono',monospace;">行</div>
<div class="t" style="left:516.6499999999999px;top:549.87px;font-size:12.6px;color:#d4d4d4;font-weight:normal;letter-spacing:0px;font-family:'Liberation Mono',monospace;">操</div>
<div class="t" style="left:530.0199999999999px;top:549.87px;font-size:12.6px;color:#d4d4d4;font-weight:normal;letter-spacing:0px;font-family:'Liberation Mono',monospace;">作</div>
<div class="t" style="left:542.9899999999999px;top:549.23px;font-size:13.45px;color:#d4d4d4;font-weight:normal;letter-spacing:0px;font-family:'Liberation Mono',monospace;transform:scaleY(1.12);transform-origin:0 10.22px">2]</div>
<div class="t" style="left:379.3px;top:569.33px;font-size:13.45px;color:#d4d4d4;font-weight:normal;letter-spacing:0px;font-family:'Liberation Mono',monospace;transform:scaleY(1.12);transform-origin:0 10.22px">  C --&gt; E[</div>
<div class="t" style="left:460.3999999999999px;top:569.97px;font-size:12.6px;color:#d4d4d4;font-weight:normal;letter-spacing:0px;font-family:'Liberation Mono',monospace;">结</div>
<div class="t" style="left:473.7699999999999px;top:569.97px;font-size:12.6px;color:#d4d4d4;font-weight:normal;letter-spacing:0px;font-family:'Liberation Mono',monospace;">束</div>
<div class="t" style="left:486.73999999999995px;top:569.33px;font-size:13.45px;color:#d4d4d4;font-weight:normal;letter-spacing:0px;font-family:'Liberation Mono',monospace;transform:scaleY(1.12);transform-origin:0 10.22px">]</div>
<div class="t" style="left:379.3px;top:589.43px;font-size:13.45px;color:#d4d4d4;font-weight:normal;letter-spacing:0px;font-family:'Liberation Mono',monospace;transform:scaleY(1.12);transform-origin:0 10.22px">  D --&gt; E</div>
<div class="t" style="left:379.3px;top:609.53px;font-size:13.45px;color:#d4d4d4;font-weight:normal;letter-spacing:0px;font-family:'Liberation Mono',monospace;transform:scaleY(1.12);transform-origin:0 10.22px">````</div>
<div class="t" style="left:379.3px;top:689.93px;font-size:13.45px;color:#d4d4d4;font-weight:normal;letter-spacing:0px;font-family:'Liberation Mono',monospace;transform:scaleY(1.12);transform-origin:0 10.22px">### </div>
<svg style="left:411.78px;top:687.7500000000001px" width="13.2" height="13.2" viewBox="0 0 20 20"><rect x="0.3" y="0.3" width="19.4" height="19.4" rx="4" fill="url(#chkg)" stroke="#1f9a14" stroke-width="0.5"/><path d="M3.1 9.9L4.7 8.7L8.3 13.4L15.8 3.7L16.9 4.5L9.1 16.5L7.7 16.5Z" fill="#ffffff"/></svg>
<div class="t" style="left:425.18px;top:689.93px;font-size:13.45px;color:#d4d4d4;font-weight:normal;letter-spacing:0px;font-family:'Liberation Mono',monospace;transform:scaleY(1.12);transform-origin:0 10.22px"> 3. </div>
<div class="t" style="left:457.85999999999996px;top:690.57px;font-size:12.6px;color:#d4d4d4;font-weight:normal;letter-spacing:0px;font-family:'Liberation Mono',monospace;">时</div>
<div class="t" style="left:471.22999999999996px;top:690.57px;font-size:12.6px;color:#d4d4d4;font-weight:normal;letter-spacing:0px;font-family:'Liberation Mono',monospace;">序</div>
<div class="t" style="left:484.59999999999997px;top:690.57px;font-size:12.6px;color:#d4d4d4;font-weight:normal;letter-spacing:0px;font-family:'Liberation Mono',monospace;">图</div>
<div class="t" style="left:497.96999999999997px;top:690.57px;font-size:12.6px;color:#d4d4d4;font-weight:normal;letter-spacing:0px;font-family:'Liberation Mono',monospace;">（</div>
<div class="t" style="left:510.94px;top:689.93px;font-size:13.45px;color:#d4d4d4;font-weight:normal;letter-spacing:0px;font-family:'Liberation Mono',monospace;transform:scaleY(1.12);transform-origin:0 10.22px">Mermaid</div>
<div class="t" style="left:567.8300000000003px;top:690.57px;font-size:12.6px;color:#d4d4d4;font-weight:normal;letter-spacing:0px;font-family:'Liberation Mono',monospace;">）</div>
<div class="t" style="left:379.3px;top:750.23px;font-size:13.45px;color:#d4d4d4;font-weight:normal;letter-spacing:0px;font-family:'Liberation Mono',monospace;transform:scaleY(1.12);transform-origin:0 10.22px">```mermaid</div>
<div class="t" style="left:379.3px;top:770.33px;font-size:13.45px;color:#d4d4d4;font-weight:normal;letter-spacing:0px;font-family:'Liberation Mono',monospace;transform:scaleY(1.12);transform-origin:0 10.22px">sequenceDiagram</div>
<div class="t" style="left:379.3px;top:790.43px;font-size:13.45px;color:#d4d4d4;font-weight:normal;letter-spacing:0px;font-family:'Liberation Mono',monospace;transform:scaleY(1.12);transform-origin:0 10.22px">  participant User</div>
<div class="t" style="left:379.3px;top:810.53px;font-size:13.45px;color:#d4d4d4;font-weight:normal;letter-spacing:0px;font-family:'Liberation Mono',monospace;transform:scaleY(1.12);transform-origin:0 10.22px">  participant Server</div>
<div class="a" style="left:379.5px;top:504.55px;width:1px;height:100.50px;background:#404040"></div>
<div class="a" style="left:379.5px;top:785.95px;width:1px;height:40.20px;background:#404040"></div>
<div class="a" style="left:499px;top:223.75px;width:1.9px;height:19.6px;background:#aeafad"></div>
<svg style="left:382.6px;top:203.8px" width="10" height="14" viewBox="0 0 10 14"><path d="M4.6 0.3C2.1 0.3 0.3 2.2 0.3 4.6C0.3 6.3 1.3 7.4 2.3 8.5V11.6Q2.3 13.2 4 13.2H5.4Q7 13.2 7 11.6V8.5C8 7.4 9 6.3 9 4.6C9 2.2 7.1 0.3 4.6 0.3Z" fill="#ffcc00"/><circle cx="4.7" cy="10.8" r="0.9" fill="#1e1e1e"/></svg>
<div class="a" style="left:816.30px;top:104.27px;width:25.17px;height:1.3px;background:rgba(86,156,214,0.45)"></div>
<div class="a" style="left:816.30px;top:110.00px;width:27.27px;height:1.3px;background:rgba(200,200,200,0.22)"></div>
<div class="a" style="left:816.30px;top:114.06px;width:17.48px;height:1.3px;background:rgba(200,200,200,0.22)"></div>
<div class="a" style="left:816.30px;top:117.98px;width:1.40px;height:1.3px;background:rgba(200,200,200,0.22)"></div>
<div class="a" style="left:816.30px;top:119.79px;width:29.37px;height:1.3px;background:rgba(200,200,200,0.22)"></div>
<div class="a" style="left:845.67px;top:119.79px;width:9.79px;height:1.3px;background:rgba(86,156,214,0.45)"></div>
<div class="a" style="left:855.46px;top:119.79px;width:9.09px;height:1.3px;background:rgba(200,200,200,0.22)"></div>
<div class="a" style="left:816.30px;top:121.47px;width:1.40px;height:1.3px;background:rgba(200,200,200,0.22)"></div>
<div class="a" style="left:816.30px;top:131.26px;width:25.17px;height:1.3px;background:rgba(86,156,214,0.45)"></div>
<div class="a" style="left:816.30px;top:136.58px;width:9.79px;height:1.3px;background:rgba(200,200,200,0.22)"></div>
<div class="a" style="left:816.30px;top:138.68px;width:11.19px;height:1.3px;background:rgba(200,200,200,0.22)"></div>
<div class="a" style="left:816.30px;top:140.35px;width:25.17px;height:1.3px;background:rgba(200,200,200,0.22)"></div>
<div class="a" style="left:816.30px;top:142.17px;width:23.08px;height:1.3px;background:rgba(200,200,200,0.22)"></div>
<div class="a" style="left:816.30px;top:143.85px;width:23.08px;height:1.3px;background:rgba(200,200,200,0.22)"></div>
<div class="a" style="left:816.30px;top:145.67px;width:14.69px;height:1.3px;background:rgba(200,200,200,0.22)"></div>
<div class="a" style="left:816.30px;top:147.35px;width:9.09px;height:1.3px;background:rgba(200,200,200,0.22)"></div>
<div class="a" style="left:816.30px;top:149.17px;width:8.39px;height:1.3px;background:rgba(200,200,200,0.22)"></div>
<div class="a" style="left:816.30px;top:157.84px;width:25.17px;height:1.3px;background:rgba(200,200,200,0.22)"></div>
<div class="a" style="left:816.30px;top:163.15px;width:9.79px;height:1.3px;background:rgba(200,200,200,0.22)"></div>
<div class="a" style="left:816.30px;top:164.83px;width:14.69px;height:1.3px;background:rgba(200,200,200,0.22)"></div>
<div class="a" style="left:816.30px;top:166.65px;width:16.08px;height:1.3px;background:rgba(200,200,200,0.22)"></div>
<div class="a" style="left:816.30px;top:168.33px;width:17.48px;height:1.3px;background:rgba(200,200,200,0.22)"></div>
<div class="a" style="left:816.30px;top:170.14px;width:24.48px;height:1.3px;background:rgba(200,200,200,0.22)"></div>
<div class="a" style="left:816.30px;top:171.82px;width:25.17px;height:1.3px;background:rgba(200,200,200,0.22)"></div>
<div class="a" style="left:816.30px;top:173.64px;width:25.17px;height:1.3px;background:rgba(200,200,200,0.22)"></div>
<div class="a" style="left:816.30px;top:182.59px;width:2.80px;height:1.3px;background:rgba(200,200,200,0.22)"></div>
<div class="a" style="left:816.30px;top:186.51px;width:20.28px;height:1.3px;background:rgba(200,200,200,0.22)"></div>
<div class="a" style="left:816.30px;top:190.70px;width:10.49px;height:1.3px;background:rgba(200,200,200,0.22)"></div>
<div class="a" style="left:816.30px;top:192.38px;width:4.90px;height:1.3px;background:rgba(200,200,200,0.22)"></div>
<div class="a" style="left:816.30px;top:196.30px;width:9.79px;height:1.3px;background:rgba(200,200,200,0.22)"></div>
<div class="a" style="left:816.30px;top:198.40px;width:11.19px;height:1.3px;background:rgba(200,200,200,0.22)"></div>
<div class="a" style="left:816.30px;top:200.21px;width:11.19px;height:1.3px;background:rgba(200,200,200,0.22)"></div>
<div class="a" style="left:816.30px;top:206.09px;width:34.27px;height:1.3px;background:rgba(200,200,200,0.22)"></div>
<div class="a" style="left:816.30px;top:209.58px;width:2.80px;height:1.3px;background:rgba(200,200,200,0.22)"></div>
<div class="a" style="left:816.30px;top:213.40px;width:30.77px;height:1.3px;background:rgba(200,200,200,0.22)"></div>
<div class="a" style="left:816.30px;top:217.31px;width:47.55px;height:1.3px;background:rgba(200,200,200,0.22)"></div>
<div class="a" style="left:816.30px;top:219.27px;width:19.58px;height:1.3px;background:rgba(200,200,200,0.22)"></div>
<div class="a" style="left:816.30px;top:223.19px;width:10.49px;height:1.3px;background:rgba(200,200,200,0.22)"></div>
<div class="a" style="left:816.30px;top:227.10px;width:19.58px;height:1.3px;background:rgba(200,200,200,0.22)"></div>
<div class="a" style="left:816.30px;top:229.06px;width:13.99px;height:1.3px;background:rgba(200,200,200,0.22)"></div>
<div class="a" style="left:816.30px;top:230.88px;width:10.49px;height:1.3px;background:rgba(200,200,200,0.22)"></div>
<div class="a" style="left:816.30px;top:232.98px;width:2.80px;height:1.3px;background:rgba(200,200,200,0.22)"></div>
<div class="a" style="left:816.30px;top:238.29px;width:21.68px;height:1.3px;background:rgba(200,200,200,0.22)"></div>
<div class="a" style="left:816.30px;top:242.07px;width:2.80px;height:1.3px;background:rgba(200,200,200,0.22)"></div>
<div class="a" style="left:816.30px;top:246.26px;width:18.88px;height:1.3px;background:rgba(86,156,214,0.45)"></div>
<div class="a" style="left:816.30px;top:250.04px;width:10.49px;height:1.3px;background:rgba(200,200,200,0.22)"></div>
<div class="a" style="left:816.30px;top:251.86px;width:13.29px;height:1.3px;background:rgba(106,153,85,0.5)"></div>
<div class="a" style="left:816.30px;top:253.96px;width:7.69px;height:1.3px;background:rgba(86,156,214,0.45)"></div>
<div class="a" style="left:816.30px;top:257.45px;width:2.10px;height:1.3px;background:rgba(200,200,200,0.22)"></div>
<div class="a" style="left:824.69px;top:257.45px;width:18.18px;height:1.3px;background:rgba(86,156,214,0.45)"></div>
<div class="a" style="left:816.30px;top:261.23px;width:2.80px;height:1.3px;background:rgba(200,200,200,0.22)"></div>
<div class="a" style="left:816.30px;top:265.14px;width:13.29px;height:1.3px;background:rgba(106,153,85,0.5)"></div>
<div class="a" style="left:816.30px;top:266.82px;width:7.69px;height:1.3px;background:rgba(86,156,214,0.45)"></div>
<div class="a" style="left:816.30px;top:270.74px;width:13.29px;height:1.3px;background:rgba(200,200,200,0.22)"></div>
<div class="a" style="left:816.30px;top:272.84px;width:13.29px;height:1.3px;background:rgba(200,200,200,0.22)"></div>
<div class="a" style="left:816.30px;top:274.65px;width:13.29px;height:1.3px;background:rgba(200,200,200,0.22)"></div>
<div class="a" style="left:816.30px;top:276.33px;width:2.10px;height:1.3px;background:rgba(200,200,200,0.22)"></div>
<div class="a" style="left:816.30px;top:280.25px;width:36.36px;height:1.3px;background:rgba(200,200,200,0.22)"></div>
<div class="a" style="left:852.66px;top:280.25px;width:15.38px;height:1.3px;background:rgba(206,145,120,0.45)"></div>
<div class="a" style="left:816.30px;top:282.21px;width:32.87px;height:1.3px;background:rgba(206,145,120,0.45)"></div>
<div class="a" style="left:850.57px;top:282.21px;width:18.88px;height:1.3px;background:rgba(200,200,200,0.22)"></div>
<div class="a" style="left:816.30px;top:286.12px;width:2.80px;height:1.3px;background:rgba(200,200,200,0.22)"></div>
<div class="a" style="left:816.30px;top:290.04px;width:23.78px;height:1.3px;background:rgba(86,156,214,0.45)"></div>
<div class="a" style="left:816.30px;top:293.82px;width:16.08px;height:1.3px;background:rgba(200,200,200,0.22)"></div>
<div class="a" style="left:833.08px;top:293.82px;width:25.17px;height:1.3px;background:rgba(206,145,120,0.45)"></div>
<div class="a" style="left:816.30px;top:295.91px;width:13.99px;height:1.3px;background:rgba(206,145,120,0.45)"></div>
<div class="a" style="left:816.30px;top:298.01px;width:11.19px;height:1.3px;background:rgba(200,200,200,0.22)"></div>
<div class="a" style="left:816.30px;top:301.51px;width:0.70px;height:1.3px;background:rgba(86,156,214,0.45)"></div>
<div class="a" style="left:819.10px;top:301.51px;width:13.99px;height:1.3px;background:rgba(206,145,120,0.45)"></div>
<div class="a" style="left:816.30px;top:303.61px;width:0.70px;height:1.3px;background:rgba(86,156,214,0.45)"></div>
<div class="a" style="left:819.10px;top:303.61px;width:13.29px;height:1.3px;background:rgba(206,145,120,0.45)"></div>
<div class="a" style="left:816.30px;top:305.70px;width:0.70px;height:1.3px;background:rgba(86,156,214,0.45)"></div>
<div class="a" style="left:819.10px;top:305.70px;width:13.99px;height:1.3px;background:rgba(206,145,120,0.45)"></div>
<div class="a" style="left:816.30px;top:307.80px;width:0.70px;height:1.3px;background:rgba(86,156,214,0.45)"></div>
<div class="a" style="left:819.10px;top:307.80px;width:14.69px;height:1.3px;background:rgba(206,145,120,0.45)"></div>
<div class="a" style="left:816.30px;top:309.62px;width:0.70px;height:1.3px;background:rgba(86,156,214,0.45)"></div>
<div class="a" style="left:819.10px;top:309.62px;width:13.99px;height:1.3px;background:rgba(206,145,120,0.45)"></div>
<div class="a" style="left:816.30px;top:311.30px;width:0.70px;height:1.3px;background:rgba(86,156,214,0.45)"></div>
<div class="a" style="left:819.10px;top:311.30px;width:13.29px;height:1.3px;background:rgba(206,145,120,0.45)"></div>
<div class="a" style="left:816.30px;top:314.79px;width:2.80px;height:1.3px;background:rgba(200,200,200,0.22)"></div>
<div class="a" style="left:816.30px;top:318.99px;width:37.06px;height:1.3px;background:rgba(200,200,200,0.22)"></div>
<div class="a" style="left:853.36px;top:318.99px;width:2.80px;height:1.3px;background:rgba(206,145,120,0.45)"></div>
<div class="a" style="left:856.16px;top:318.99px;width:15.38px;height:1.3px;background:rgba(200,200,200,0.22)"></div>
<div class="a" style="left:816.30px;top:321.09px;width:7.69px;height:1.3px;background:rgba(200,200,200,0.22)"></div>
<div class="a" style="left:872.4px;top:102.6px;width:1px;height:720px;background:#2b2b2b;"></div>
<div class="a" style="left:872.9px;top:129.9px;width:12.6px;height:1.6px;background:#8c8c8c;"></div>
<div class="a" style="left:886px;top:48px;width:576px;height:775px;background:#1e1e1e;"></div>
<div class="a" style="left:1063.4px;top:48px;width:400px;height:33px;background:#252526;"></div>
<div class="a" style="left:885.2px;top:48px;width:1px;height:33px;background:#3a3a3a;"></div>
<svg style="left:894.4px;top:56.2px" width="17" height="17" viewBox="0 0 17 17"><path d="M1 0.5H11.5L13 2V16H2.5L1 14.5Z" fill="#eceff1"/><path d="M1 0.5H11.5L13 2V16H2.5L1 14.5Z" fill="none" stroke="#b0bec5" stroke-width=".6"/><rect x="2.5" y="2.5" width="4" height="1.2" fill="#f9c74f"/><rect x="2.5" y="5" width="6" height="1" fill="#b0bec5"/><rect x="2.5" y="12.5" width="6" height="1" fill="#4db6ac"/><circle cx="8" cy="9" r="3.2" fill="#fff" stroke="#37474f" stroke-width="1.3"/><path d="M10.3 11.3L13.5 14.3" stroke="#f9a825" stroke-width="1.8"/></svg>
<div class="t" style="left:915.8px;top:58.89px;font-size:12.6px;color:#9d9d9d;font-weight:normal;letter-spacing:0px;font-family:'Liberation Sans',sans-serif;">Preview 产品介绍.md</div>
<svg style="left:1045.6px;top:60.2px" width="9" height="9" viewBox="0 0 9 9"><path d="M0.5 0.5L8.3 8.3M8.3 0.5L0.5 8.3" stroke="#9d9d9d" stroke-width="1.1"/></svg>
<div class="a" style="left:1433.6000000000001px;top:63.6px;width:2.2px;height:2.2px;border-radius:50%;background:#c5c5c5"></div>
<div class="a" style="left:1438.5px;top:63.6px;width:2.2px;height:2.2px;border-radius:50%;background:#c5c5c5"></div>
<div class="a" style="left:1443.4px;top:63.6px;width:2.2px;height:2.2px;border-radius:50%;background:#c5c5c5"></div>
<div class="a" style="left:886px;top:81px;width:561.6px;height:742px;background:#ffffff;"></div>
<div class="a" style="left:886px;top:80px;width:562px;height:1.2px;background:#151515;"></div>
<div class="a" style="left:1447.6px;top:81px;width:14.4px;height:742px;background:#1e1e1e;"></div>
<div class="a" style="left:1450.6px;top:86.7px;width:8.2px;height:232.7px;border-radius:4.1px;background:#434343"></div>
<svg style="left:1353.8px;top:94.5px" width="15" height="8" viewBox="0 0 15 8"><path d="M0.8 7.2L7.1 0.9L13.4 7.2" fill="none" stroke="#424a53" stroke-width="1.4"/></svg>
<svg style="left:1387.5px;top:91px" width="17" height="16" viewBox="0 0 17 16"><path d="M13.6 6.2A6.2 6.2 0 0 0 2.4 5.5" fill="none" stroke="#424a53" stroke-width="1.4"/><path d="M2.2 9.4A6.2 6.2 0 0 0 13.5 10.1" fill="none" stroke="#424a53" stroke-width="1.4"/><path d="M14.6 1.2V6.6H9.3" fill="none" stroke="#424a53" stroke-width="1.4"/><path d="M1.2 14.4V9.1H6.5" fill="none" stroke="#424a53" stroke-width="1.4"/></svg>
<svg style="left:1422.5px;top:93px" width="16" height="12" viewBox="0 0 16 12"><g fill="#424a53"><rect x="0.3" y="0.7" width="1.6" height="1.6"/><rect x="0.3" y="4.8" width="1.6" height="1.6"/><rect x="0.3" y="8.9" width="1.6" height="1.6"/><rect x="3.8" y="0.85" width="10.6" height="1.3"/><rect x="3.8" y="4.95" width="10.6" height="1.3"/><rect x="3.8" y="9.05" width="10.6" height="1.3"/></g></svg>
<svg style="left:1397.5px;top:800.5px" width="20" height="20" viewBox="0 0 20 20"><path d="M8.2 11.8L11.8 8.2" stroke="#424a53" stroke-width="1.4"/><path d="M9.4 5.6L11.6 3.4Q13.6 1.4 15.6 3.4L16.6 4.4Q18.6 6.4 16.6 8.4L14.4 10.6M10.6 14.4L8.4 16.6Q6.4 18.6 4.4 16.6L3.4 15.6Q1.4 13.6 3.4 11.6L5.6 9.4" fill="none" stroke="#424a53" stroke-width="1.4"/></svg>
<svg style="left:1427px;top:803.5px" width="15" height="13" viewBox="0 0 15 13"><g fill="#424a53"><rect x="0" y="1" width="14" height="1.3"/><rect x="0" y="5.4" width="14" height="1.3"/><rect x="0" y="9.8" width="14" height="1.3"/></g></svg>
<svg style="left:916.2px;top:128.7px" width="22.8" height="22.8" viewBox="0 0 20 20"><rect x="0.3" y="0.3" width="19.4" height="19.4" rx="4" fill="url(#chkg)" stroke="#1f9a14" stroke-width="0.5"/><path d="M3.1 9.9L4.7 8.7L8.3 13.4L15.8 3.7L16.9 4.5L9.1 16.5L7.7 16.5Z" fill="#ffffff"/></svg>
<div class="t" style="left:946.3px;top:130.34px;font-size:21.6px;color:#000;font-weight:bold;letter-spacing:0px;font-family:'Liberation Sans',sans-serif;">1.</div>
<div class="t" style="left:970.8px;top:129.99px;font-size:22.6px;color:#000;font-weight:bold;letter-spacing:0px;font-family:'Liberation Sans',sans-serif;">数学公式</div>
<div class="t" style="left:1063px;top:129.99px;font-size:22.6px;color:#000;font-weight:bold;letter-spacing:0px;font-family:'Liberation Sans',sans-serif;">（</div>
<div class="t" style="left:1086.2px;top:129.49px;font-size:22.6px;color:#000;font-weight:bold;letter-spacing:0px;font-family:'Liberation Sans',sans-serif;">LaTeX</div>
<div class="t" style="left:1153.4px;top:129.99px;font-size:22.6px;color:#000;font-weight:bold;letter-spacing:0px;font-family:'Liberation Sans',sans-serif;">）</div>
<div class="t" style="left:916.3px;top:175.85px;font-size:15px;color:#333333;font-weight:normal;letter-spacing:0.25px;font-family:'Liberation Sans',sans-serif;-webkit-text-stroke:0">这是一个行内公式：</div>
<div class="t" style="left:1053.6px;top:171.53px;font-size:19px;color:#333;font-weight:normal;letter-spacing:0px;font-family:'Liberation Serif',serif;font-style:italic">E</div>
<svg style="left:0;top:0" width="1" height="1"><path d="M1074.9 180.6H1087.1M1074.9 184.6H1087.1" stroke="#333" stroke-width="0.9"/></svg>
<div class="t" style="left:1092.6px;top:171.53px;font-size:19px;color:#333;font-weight:normal;letter-spacing:1.8px;font-family:'Liberation Serif',serif;font-style:italic">mc</div>
<div class="t" style="left:1117.8px;top:170.31px;font-size:12.4px;color:#333;font-weight:normal;letter-spacing:0px;font-family:'Liberation Serif',serif;">2</div>
<div class="t" style="left:916.3px;top:214.05px;font-size:15px;color:#333333;font-weight:normal;letter-spacing:0.25px;font-family:'Liberation Sans',sans-serif;-webkit-text-stroke:0">这是一个块级公式：</div>
<svg style="left:1094px;top:249.5px" width="20" height="44" viewBox="0 0 20 44"><path d="M16.2 2.4Q15.6 0.7 14 1.1Q11.6 1.8 10.7 8.5L7.9 32.5Q7 40.2 4.4 41.6Q2.5 42.6 1.5 41.2" fill="none" stroke="#333" stroke-width="1.5" stroke-linecap="round"/><circle cx="15.9" cy="3" r="1.5" fill="#333"/><circle cx="1.9" cy="40.7" r="1.5" fill="#333"/></svg>
<div class="t" style="left:1111.6px;top:244.29px;font-size:17px;color:#333;font-weight:normal;letter-spacing:0px;font-family:'Liberation Serif',serif;">∞</div>
<div class="t" style="left:1104.4px;top:282.97px;font-size:11.6px;color:#333;font-weight:normal;letter-spacing:0px;font-family:'Liberation Serif',serif;">0</div>
<div class="t" style="left:1129.4px;top:260.71px;font-size:19.5px;color:#333;font-weight:normal;letter-spacing:0px;font-family:'Liberation Serif',serif;font-style:italic">e</div>
<svg style="left:0;top:0" width="1" height="1"><path d="M1139.2 265.3H1147.2" stroke="#333" stroke-width="0.9"/></svg>
<div class="t" style="left:1147.8px;top:258.01px;font-size:13px;color:#333;font-weight:normal;letter-spacing:0px;font-family:'Liberation Serif',serif;font-style:italic">x</div>
<div class="t" style="left:1155.6px;top:255.40px;font-size:9.4px;color:#333;font-weight:normal;letter-spacing:0px;font-family:'Liberation Serif',serif;">2</div>
<div class="t" style="left:1161.6px;top:260.71px;font-size:19.5px;color:#333;font-weight:normal;letter-spacing:0.6px;font-family:'Liberation Serif',serif;font-style:italic">dx</div>
<svg style="left:0;top:0" width="1" height="1"><path d="M1188.8 269.5H1201.2M1188.8 273.6H1201.2" stroke="#333" stroke-width="0.9"/></svg>
<div class="a" style="left:1209.5px;top:271px;width:26.3px;height:1px;background:#333;"></div>
<svg style="left:1209.3px;top:248.8px" width="27" height="17" viewBox="0 0 27 17"><path d="M0.6 8.6L2.4 7.6L6 15.4L12.4 0.8H26.6" fill="none" stroke="#333" stroke-width="1.1"/></svg>
<div class="t" style="left:1225.2px;top:251.15px;font-size:15px;color:#333;font-weight:normal;letter-spacing:0px;font-family:'Liberation Serif',serif;font-style:italic">π</div>
<div class="t" style="left:1218.2px;top:275.92px;font-size:16px;color:#333;font-weight:normal;letter-spacing:0px;font-family:'Liberation Serif',serif;">2</div>
<svg style="left:916px;top:318.5px" width="22.8" height="22.8" viewBox="0 0 20 20"><rect x="0.3" y="0.3" width="19.4" height="19.4" rx="4" fill="url(#chkg)" stroke="#1f9a14" stroke-width="0.5"/><path d="M3.1 9.9L4.7 8.7L8.3 13.4L15.8 3.7L16.9 4.5L9.1 16.5L7.7 16.5Z" fill="#ffffff"/></svg>
<div class="t" style="left:945.3px;top:320.14px;font-size:21.6px;color:#000;font-weight:bold;letter-spacing:0px;font-family:'Liberation Sans',sans-serif;">2.</div>
<div class="t" style="left:970.8px;top:319.79px;font-size:22.6px;color:#000;font-weight:bold;letter-spacing:0px;font-family:'Liberation Sans',sans-serif;">流程图</div>
<div class="t" style="left:1040.6px;top:319.79px;font-size:22.6px;color:#000;font-weight:bold;letter-spacing:0px;font-family:'Liberation Sans',sans-serif;">（</div>
<div class="t" style="left:1063.6px;top:319.29px;font-size:22.6px;color:#000;font-weight:bold;letter-spacing:0px;font-family:'Liberation Sans',sans-serif;">Mermaid</div>
<div class="t" style="left:1159.2px;top:319.79px;font-size:22.6px;color:#000;font-weight:bold;letter-spacing:0px;font-family:'Liberation Sans',sans-serif;">）</div>
<svg style="left:0;top:0" width="1476" height="858" viewBox="0 0 1476 858"><defs><clipPath id="pc"><rect x="886" y="81" width="561.6" height="715.8"/></clipPath></defs><g clip-path="url(#pc)"><rect x="1030.5" y="366.5" width="88" height="52" fill="#ececff" stroke="#9370db" stroke-width="1"/><path d="M1074.4 466L1134 525.8L1074.4 585.4L1014.8 525.8Z" fill="#ececff" stroke="#9370db" stroke-width="1"/><rect x="923.2" y="655.5" width="127.4" height="52" fill="#ececff" stroke="#9370db" stroke-width="1"/><rect x="1098.4" y="655.5" width="127.4" height="52" fill="#ececff" stroke="#9370db" stroke-width="1"/><rect x="1030.5" y="755.5" width="88" height="52" fill="#ececff" stroke="#9370db" stroke-width="1"/><g fill="none" stroke="#333" stroke-width="1.1"><path d="M1074.5 419V460"/><path d="M1046.4 556.7C1022 582 1002 603 994 622Q988 636 987 649"/><path d="M1102.6 556.7C1127 582 1147 603 1155 622Q1161 636 1162 649"/><path d="M987.1 707.4V713C987.1 730 1000 741 1024 752"/><path d="M1161.6 707.4V713C1161.6 730 1149 741 1125 752"/></g><g fill="#333"><path d="M1069.6 458.6H1079.4L1074.5 466.4Z"/><path d="M982.4 647.6H991.8L987 655.6Z"/><path d="M1157.2 647.6H1166.6L1161.8 655.6Z"/><path d="M1021.4 756.4L1025 748.6L1030.8 755.8Z"/><path d="M1128 756.4L1124.4 748.6L1118.6 755.8Z"/></g><rect x="978.9" y="609" width="15.9" height="22.7" fill="#e8e8e8" fill-opacity="0.9"/><rect x="1154" y="609" width="15.9" height="22.7" fill="#e8e8e8" fill-opacity="0.9"/></g></svg>
<div class="t" style="left:974.5px;top:385.99px;width:200px;text-align:center;font-size:14.6px;color:#333333;-webkit-text-stroke:0">开始</div>
<div class="t" style="left:974.5px;top:519.59px;width:200px;text-align:center;font-size:14.6px;color:#333333;-webkit-text-stroke:0">条件判断?</div>
<div class="t" style="left:887px;top:674.99px;width:200px;text-align:center;font-size:14.6px;color:#333333;-webkit-text-stroke:0">执行操作1</div>
<div class="t" style="left:1062px;top:674.99px;width:200px;text-align:center;font-size:14.6px;color:#333333;-webkit-text-stroke:0">执行操作2</div>
<div class="t" style="left:886.9px;top:614.19px;width:200px;text-align:center;font-size:14.6px;color:#333333;-webkit-text-stroke:0">是</div>
<div class="t" style="left:1062px;top:614.19px;width:200px;text-align:center;font-size:14.6px;color:#333333;-webkit-text-stroke:0">否</div>
<div class="t" style="left:974.5999999999999px;top:774.99px;width:200px;text-align:center;font-size:14.6px;color:#333333;-webkit-text-stroke:0">结束</div>
<div class="a" style="left:0px;top:823.5px;width:1476px;height:22px;background:#2379cd;"></div>
<div class="a" style="left:0px;top:823.5px;width:47px;height:22px;background:#16825d;"></div>
<svg style="left:25.5px;top:827.5px" width="10" height="12" viewBox="0 0 10 12"><path d="M1 4.5L4.2 7.6L1 10.8M8.8 0.8L5.6 3.9L8.8 7" fill="none" stroke="#fff" stroke-width="1.1"/></svg>
<svg style="left:54px;top:827.6px" width="13" height="13" viewBox="0 0 13 13"><path d="M11.8 0.8Q7 1 4.6 5.2L2.4 5.4L0.9 7.2L3.4 7.6L5.6 9.8L6 12.3L7.8 10.8L8 8.6Q12.2 6.2 12.4 1.4Z" fill="none" stroke="#fff" stroke-width="1"/><circle cx="8.6" cy="4.6" r="1.1" fill="#fff"/><path d="M3 9.6L1 12" stroke="#fff" stroke-width="1"/></svg>
<svg style="left:67.5px;top:827.4px" width="13" height="13" viewBox="0 0 13 13"><path d="M12 1L9.5 1.5L6.5 4.5L8.5 6.5L11.5 3.5Z M6 7L4 9 M3.5 6.5L1.5 8.5Q0.8 9.6 1.6 10.8L2.2 11.4Q3.4 12.2 4.5 11.5L6.5 9.5Z" fill="none" stroke="#fff" stroke-width="1"/></svg>
<div class="t" style="left:84.6px;top:827.74px;font-size:11.6px;color:#ffffff;font-weight:normal;letter-spacing:0.25px;font-family:'Liberation Sans',sans-serif;">Launchpad</div>
<svg style="left:160px;top:827.6px" width="13" height="13" viewBox="0 0 13 13"><circle cx="6.5" cy="6.4" r="5.6" fill="none" stroke="#fff" stroke-width="1"/><path d="M4.4 4.3L8.6 8.5M8.6 4.3L4.4 8.5" stroke="#fff" stroke-width="1"/></svg>
<div class="t" style="left:176.2px;top:827.74px;font-size:11.6px;color:#ffffff;font-weight:normal;letter-spacing:0.25px;font-family:'Liberation Sans',sans-serif;">0</div>
<svg style="left:187.2px;top:827.8px" width="13" height="12" viewBox="0 0 13 12"><path d="M6.3 1L11.8 11H0.8Z" fill="none" stroke="#fff" stroke-width="1" stroke-linejoin="round"/><path d="M6.3 4.6V8" stroke="#fff" stroke-width="1"/><circle cx="6.3" cy="9.4" r=".55" fill="#fff"/></svg>
<div class="t" style="left:203.6px;top:827.74px;font-size:11.6px;color:#ffffff;font-weight:normal;letter-spacing:0.25px;font-family:'Liberation Sans',sans-serif;">0</div>
<svg style="left:226.5px;top:827.6px" width="13" height="13" viewBox="0 0 13 13"><path d="M9.6 1.2L11.8 3.4L4 11.2L1 12L1.8 9Z M8.4 2.4L10.6 4.6" fill="none" stroke="#fff" stroke-width="1" stroke-linejoin="round"/></svg>
<div class="t" style="left:243.6px;top:827.74px;font-size:11.6px;color:#ffffff;font-weight:normal;letter-spacing:0.25px;font-family:'Liberation Sans',sans-serif;">159 Words</div>
<svg style="left:318.4px;top:828.4px" width="13" height="13" viewBox="0 0 13 13"><circle cx="6" cy="6" r="5.3" fill="none" stroke="#fff" stroke-width="0.9"/><ellipse cx="6" cy="6" rx="2.4" ry="5.3" fill="none" stroke="#fff" stroke-width="0.9"/><path d="M0.7 6H11.3M1.5 3.3H10.5M1.5 8.7H10.5" stroke="#fff" stroke-width="0.8"/></svg>
<div class="t" style="left:333.6px;top:827.74px;font-size:11.6px;color:#ffffff;font-weight:normal;letter-spacing:0.25px;font-family:'Liberation Sans',sans-serif;">Open In Browser</div>
<div class="t" style="left:677.6px;top:827.74px;font-size:11.6px;color:#ffffff;font-weight:normal;letter-spacing:0.25px;font-family:'Liberation Sans',sans-serif;">Ln 7, Col 10</div>
<div class="t" style="left:758.8px;top:827.74px;font-size:11.6px;color:#ffffff;font-weight:normal;letter-spacing:0.25px;font-family:'Liberation Sans',sans-serif;">Spaces: 4</div>
<div class="t" style="left:827.6px;top:827.74px;font-size:11.6px;color:#ffffff;font-weight:normal;letter-spacing:0.25px;font-family:'Liberation Sans',sans-serif;">UTF-8</div>
<div class="t" style="left:877.6px;top:827.74px;font-size:11.6px;color:#ffffff;font-weight:normal;letter-spacing:0.25px;font-family:'Liberation Sans',sans-serif;">LF</div>
<svg style="left:906.5px;top:830px" width="13" height="10" viewBox="0 0 13 10"><path d="M1 3Q1.5 8.6 6.2 8.8Q11 8.6 11.6 3" fill="none" stroke="#fff" stroke-width="1"/></svg>
<div class="t" style="left:925.4px;top:827.74px;font-size:11.6px;color:#ffffff;font-weight:normal;letter-spacing:0.25px;font-family:'Liberation Sans',sans-serif;">Markdown</div>
<svg style="left:996.4px;top:827.8px" width="15" height="13" viewBox="0 0 15 13"><circle cx="4.6" cy="4" r="2.9" fill="none" stroke="#fff" stroke-width="1"/><circle cx="9.6" cy="4" r="2.9" fill="none" stroke="#fff" stroke-width="1"/><path d="M1.6 6.4Q0.6 7.5 1 9Q2 11.8 7.1 11.8Q12.2 11.8 13.2 9Q13.6 7.5 12.6 6.4" fill="none" stroke="#fff" stroke-width="1"/><path d="M5.7 7.5V9.3M8.5 7.5V9.3" stroke="#fff" stroke-width="1.1"/></svg>
<svg style="left:1026.4px;top:828.6px" width="14" height="12" viewBox="0 0 14 12"><path d="M4.5 1.5H12.4V6.2H7.6V9.6" fill="none" stroke="#fff" stroke-width="1.6"/><rect x="0.6" y="6.6" width="3" height="3" fill="#fff"/><rect x="8.4" y="9" width="2.2" height="2.2" fill="#fff"/></svg>
<svg style="left:1055px;top:827.2px" width="16" height="15" viewBox="0 0 16 15"><g transform="scale(0.52)"><path d="M11.9 3H16.4L17.5 5.9L24.1 6.1L25.9 9.4L24.1 11.9L26.6 16.8L25.2 20.3L21.7 20.6L18.9 25.9H15L13.3 23.1H7L5.6 19.6L7 17.1L3.8 11.9L5.6 8.7H9.4Z" fill="#fff"/><path d="M10.5 10.3H24.1M8 10.1L13.6 20.6M21.3 13.3L15 24.5M12.2 5.2L10.5 9.1M8.4 21.3H13.3M23.1 13.3L25.2 16.1" stroke="#2379cd" stroke-width="1.8" fill="none"/></g></svg>
<svg style="left:1086.5px;top:828px" width="12" height="13" viewBox="0 0 12 13"><circle cx="5.8" cy="5.2" r="1.4" fill="none" stroke="#fff" stroke-width="1"/><path d="M3.2 8Q1.4 6.8 1.4 5Q1.6 0.9 5.8 0.8Q10 0.9 10.2 5Q10.2 6.8 8.4 8M3.9 6.7Q3.2 6 3.2 5.1Q3.4 2.7 5.8 2.6Q8.2 2.7 8.4 5.1Q8.4 6 7.7 6.7M5.8 6.6L5 12.4H6.6Z" fill="none" stroke="#fff" stroke-width="0.9"/></svg>
<div class="t" style="left:1102px;top:827.74px;font-size:11.6px;color:#ffffff;font-weight:normal;letter-spacing:0.25px;font-family:'Liberation Sans',sans-serif;">Go Live</div>
<div class="t" style="left:1161.6px;top:828.48px;font-size:11.2px;color:#fff;font-weight:bold;letter-spacing:1.9px;font-family:'Liberation Sans',sans-serif;transform:scaleY(0.78);transform-origin:0 85%;font-family:'Liberation Mono',monospace">CODEGPT</div>
<svg style="left:1226px;top:828.4px" width="10" height="10" viewBox="0 0 10 10"><path d="M1.2 8.8Q1.2 1.6 8.4 1.2" fill="none" stroke="#fff" stroke-width="1.1"/></svg>
<svg style="left:1254px;top:829.2px" width="12" height="10" viewBox="0 0 12 10"><path d="M1 5L4.2 8.6L11 1.2" fill="none" stroke="#fff" stroke-width="1.1"/></svg>
<div class="t" style="left:1270.4px;top:827.74px;font-size:11.6px;color:#ffffff;font-weight:normal;letter-spacing:0.25px;font-family:'Liberation Sans',sans-serif;">Continue (NE)</div>
<svg style="left:1361.2px;top:829.4px" width="14" height="10" viewBox="0 0 14 10"><path d="M0.8 5.4L3.4 8.4L9.6 1.2M5.6 7.6L6.6 8.4L12.8 1.2" fill="none" stroke="#fff" stroke-width="1"/></svg>
<div class="t" style="left:1378.2px;top:827.74px;font-size:11.6px;color:#ffffff;font-weight:normal;letter-spacing:0.25px;font-family:'Liberation Sans',sans-serif;">Prettier</div>
<svg style="left:1435.8px;top:827.8px" width="12" height="13" viewBox="0 0 12 13"><path d="M5.6 1.2Q2 1.5 2 5.4V8.6L0.8 10.4H10.4L9.2 8.6V6.4" fill="none" stroke="#fff" stroke-width="1"/><path d="M4.2 11.6Q5.6 12.8 7 11.6" fill="none" stroke="#fff" stroke-width="1"/><circle cx="9" cy="3.2" r="2" fill="#fff"/></svg>
</div></div>
</body>
</html>
